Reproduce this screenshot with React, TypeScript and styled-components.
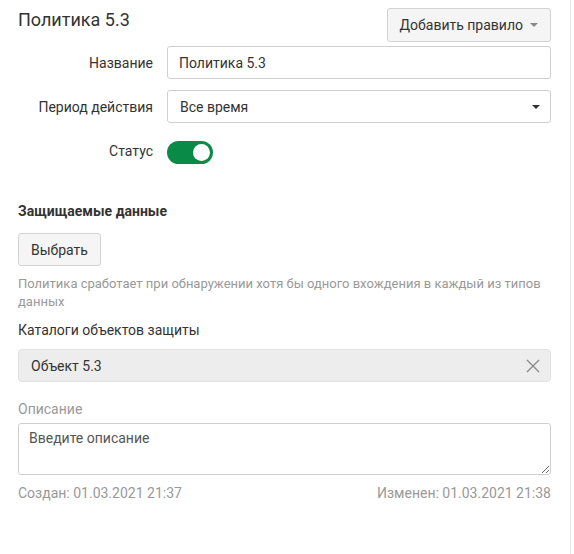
import React from "react";
import styled, { createGlobalStyle } from "styled-components";

const GlobalStyle = createGlobalStyle`
  html, body {
    margin: 0;
    padding: 0;
    background: #ffffff;
  }
  body {
    font-family: Roboto, "Liberation Sans", Arial, sans-serif;
    font-size: 14px;
    color: #333333;
  }
`;

const Page = styled.div`
  width: 534px;
  height: 554px;
  padding: 0 19px 0 17px;
  border-right: 1px solid #e6e6e6;
  box-sizing: content-box;
`;

const Header = styled.div`
  display: flex;
  justify-content: space-between;
  align-items: flex-start;
  padding-top: 8px;
`;

const Title = styled.h2`
  margin: 1px 0 0 1px;
  font-size: 18px;
  font-weight: 400;
  line-height: 22px;
  color: #333;
`;

const Button = styled.button`
  display: inline-flex;
  align-items: center;
  gap: 7px;
  height: 34px;
  padding: 0 12px;
  background: #f5f5f5;
  border: 1px solid #d2d2d2;
  border-radius: 3px;
  font-family: inherit;
  font-size: 14px;
  color: #333;
  cursor: pointer;
`;

const Caret = styled.span<{ $dark?: boolean }>`
  width: 0;
  height: 0;
  border-left: 4px solid transparent;
  border-right: 4px solid transparent;
  border-top: 4px solid ${(p) => (p.$dark ? "#333" : "#888")};
`;

const Row = styled.div<{ $top: number }>`
  display: flex;
  align-items: center;
  gap: 14px;
  margin-top: ${(p) => p.$top}px;
`;

const Label = styled.label`
  width: 136px;
  text-align: right;
  color: #333;
  flex-shrink: 0;
`;

const Input = styled.input`
  flex: 1;
  height: 33px;
  box-sizing: border-box;
  border: 1px solid #cfcfcf;
  border-radius: 3px;
  padding: 0 11px;
  font-family: inherit;
  font-size: 14px;
  color: #333;
  outline: none;
`;

const Select = styled.div`
  flex: 1;
  height: 33px;
  box-sizing: border-box;
  border: 1px solid #cfcfcf;
  border-radius: 3px;
  padding: 0 10px 0 12px;
  display: flex;
  align-items: center;
  justify-content: space-between;
  color: #333;
`;

const Toggle = styled.div<{ $on: boolean }>`
  position: relative;
  width: 46px;
  height: 23px;
  border-radius: 12px;
  background: ${(p) => (p.$on ? "#0a8a47" : "#ccc")};

  &::after {
    content: "";
    position: absolute;
    top: 3px;
    ${(p) => (p.$on ? "right: 3px;" : "left: 3px;")}
    width: 17px;
    height: 17px;
    border-radius: 50%;
    background: #fff;
  }
`;

const StatusLabel = styled(Label)`
  margin-top: -3px;
`;

const Section = styled.div`
  margin-top: 38px;
  padding-left: 1px;
`;

const SectionTitle = styled.div`
  font-weight: 700;
  font-size: 14px;
  color: #333;
  line-height: 18px;
`;

const SelectButton = styled(Button)`
  margin-top: 13px;
  height: 33px;
  padding: 0 12px;
`;

const Hint = styled.p`
  margin: 9px 0 0;
  font-size: 13px;
  line-height: 18px;
  color: #999;
  padding-right: 8px;
`;

const FieldCaption = styled.div<{ $muted?: boolean }>`
  margin-top: ${(p) => (p.$muted ? 18 : 10)}px;
  line-height: 18px;
  color: ${(p) => (p.$muted ? "#999" : "#333")};
`;

const Chip = styled.div`
  margin-top: 10px;
  height: 33px;
  box-sizing: border-box;
  background: #ededed;
  border: 1px solid #e2e2e2;
  border-radius: 4px;
  display: flex;
  align-items: center;
  justify-content: space-between;
  padding: 0 10px 0 12px;
  color: #333;
`;

const TextArea = styled.textarea`
  display: block;
  width: 100%;
  height: 52px;
  box-sizing: border-box;
  margin-top: 5px;
  border: 1px solid #cfcfcf;
  border-radius: 3px;
  padding: 6px 10px;
  font-family: inherit;
  font-size: 14px;
  color: #333;
  resize: vertical;
  outline: none;

  &::placeholder {
    color: #555;
  }
`;

const Footer = styled.div`
  display: flex;
  justify-content: space-between;
  margin-top: 9px;
  color: #999;
  font-size: 14px;
  line-height: 18px;
`;

const CloseIcon = () => (
  <svg width="14" height="14" viewBox="0 0 14 14">
    <path d="M1 1L13 13M13 1L1 13" stroke="#8a8a8a" strokeWidth="1.4" />
  </svg>
);

export default function App() {
  return (
    <>
      <GlobalStyle />
      <Page>
        <Header>
          <Title>Политика 5.3</Title>
          <Button>
            Добавить правило <Caret />
          </Button>
        </Header>

        <Row $top={4}>
          <Label>Название</Label>
          <Input defaultValue="Политика 5.3" />
        </Row>
        <Row $top={11}>
          <Label>Период действия</Label>
          <Select>
            Все время <Caret $dark />
          </Select>
        </Row>
        <Row $top={18}>
          <StatusLabel>Статус</StatusLabel>
          <Toggle $on />
        </Row>

        <Section>
          <SectionTitle>Защищаемые данные</SectionTitle>
          <SelectButton>Выбрать</SelectButton>
          <Hint>
            Политика сработает при обнаружении хотя бы одного вхождения в каждый из типов
            данных
          </Hint>
          <FieldCaption>Каталоги объектов защиты</FieldCaption>
          <Chip>
            Объект 5.3
            <CloseIcon />
          </Chip>
          <FieldCaption $muted>Описание</FieldCaption>
          <TextArea placeholder="Введите описание" />
          <Footer>
            <span>Создан: 01.03.2021 21:37</span>
            <span>Изменен: 01.03.2021 21:38</span>
          </Footer>
        </Section>
      </Page>
    </>
  );
}
